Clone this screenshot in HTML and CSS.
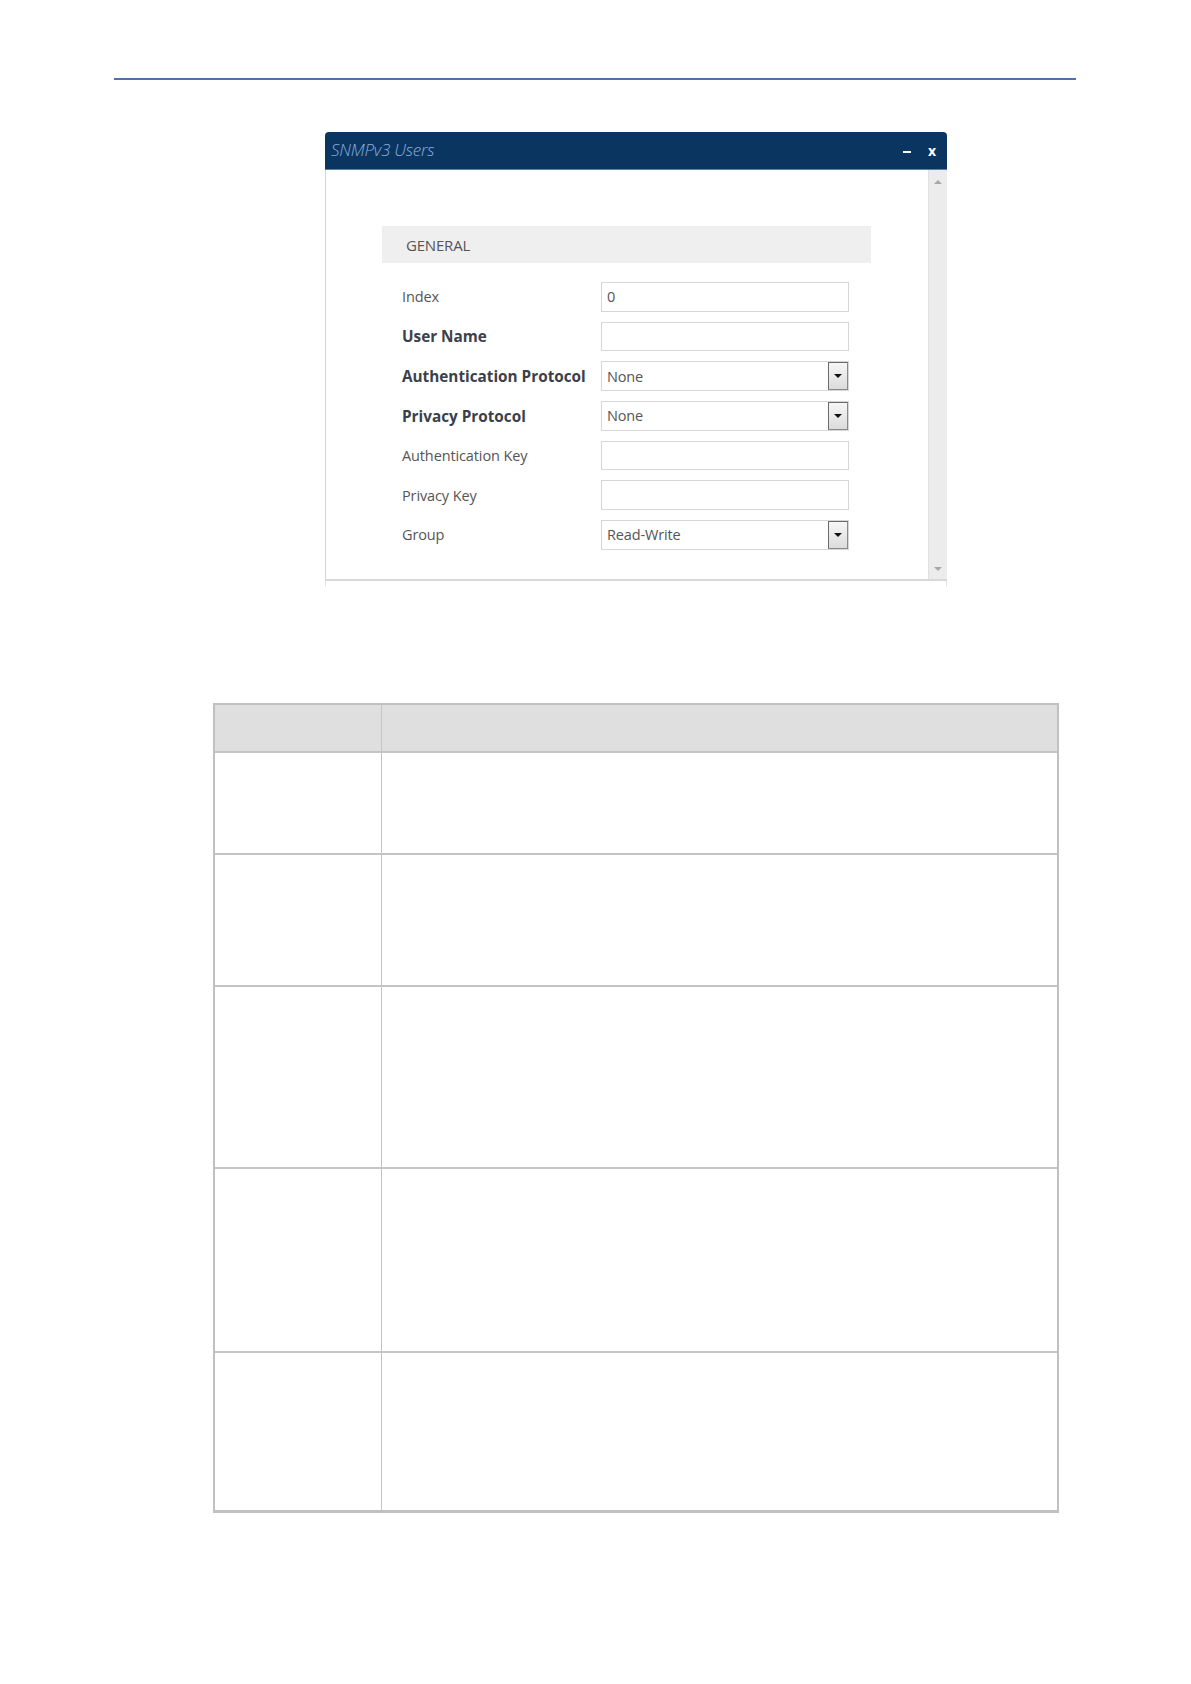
FILE: index.html
```html
<!DOCTYPE html>
<html lang="en">
<head>
<meta charset="utf-8">
<title>SNMPv3 Users</title>
<link rel="stylesheet" href="styles.css">
</head>
<body>
<div class="rule"></div>

<div class="dialog">
  <div class="titlebar">
    <span class="title">SNMPv3 Users</span>
    <div class="controls">
      <span class="minimize"></span>
      <span class="close">x</span>
    </div>
  </div>
  <div class="dialog-body">
    <div class="content">
      <div class="section-head">GENERAL</div>
      <div class="form">
        <div class="row">
          <span class="label">Index</span>
          <div class="field"><span class="value">0</span></div>
        </div>
        <div class="row">
          <span class="label bold">User Name</span>
          <div class="field"></div>
        </div>
        <div class="row">
          <span class="label bold">Authentication Protocol</span>
          <div class="field select"><span class="value">None</span><span class="drop"><span class="tri"></span></span></div>
        </div>
        <div class="row">
          <span class="label bold">Privacy Protocol</span>
          <div class="field select"><span class="value">None</span><span class="drop"><span class="tri"></span></span></div>
        </div>
        <div class="row">
          <span class="label">Authentication Key</span>
          <div class="field"></div>
        </div>
        <div class="row">
          <span class="label">Privacy Key</span>
          <div class="field"></div>
        </div>
        <div class="row">
          <span class="label">Group</span>
          <div class="field select"><span class="value">Read-Write</span><span class="drop"><span class="tri"></span></span></div>
        </div>
      </div>
    </div>
    <div class="scrollbar">
      <span class="arrow up"></span>
      <span class="arrow down"></span>
    </div>
  </div>
  <div class="tail"></div>
</div>

<div class="table">
  <div class="trow head"><div class="cell"></div><div class="cell"></div></div>
  <div class="trow r1"><div class="cell"></div><div class="cell"></div></div>
  <div class="trow r2"><div class="cell"></div><div class="cell"></div></div>
  <div class="trow r3"><div class="cell"></div><div class="cell"></div></div>
  <div class="trow r4"><div class="cell"></div><div class="cell"></div></div>
  <div class="trow r5"><div class="cell"></div><div class="cell"></div></div>
</div>
</body>
</html>
```

FILE: styles.css
```css
* { box-sizing: border-box; }

body {
  margin: 0;
  background: #ffffff;
  font-family: "Open Sans", "Liberation Sans", sans-serif;
}

.rule {
  margin: 78px 0 0 114px;
  width: 962px;
  height: 2px;
  background: #4d72a9;
}

.dialog {
  margin: 52px 0 0 325px;
  width: 622px;
}

.titlebar {
  height: 38px;
  background: #0b3561;
  border-radius: 4px 4px 0 0;
  display: flex;
  align-items: center;
  justify-content: space-between;
  padding: 0 11px 3px 6px;
  border-bottom: 1px solid #5a7ea8;
}

.title {
  font-style: italic;
  font-weight: 300;
  font-size: 17px;
  letter-spacing: -0.2px;
  color: #8aaddb;
}

.controls {
  display: flex;
  align-items: center;
  gap: 17px;
  padding-top: 6px;
}

.minimize {
  display: block;
  width: 8px;
  height: 2px;
  background: #ffffff;
}

.close {
  color: #ffffff;
  font-weight: 700;
  font-size: 14px;
  line-height: 1;
  padding-bottom: 2px;
}

.dialog-body {
  display: flex;
  height: 411px;
  border-left: 1px solid #d4d4d4;
  border-bottom: 2px solid #d8d8d8;
}

.content {
  flex: 1;
  padding: 56px 57px 0 56px;
}

.section-head {
  height: 37px;
  background: #efefef;
  display: flex;
  align-items: center;
  padding-left: 24px;
  font-size: 15px;
  color: #555555;
  letter-spacing: -0.2px;
}

.form {
  margin-top: 19px;
  padding-left: 20px;
  display: flex;
  flex-direction: column;
  gap: 10.2px;
}

.row {
  display: grid;
  grid-template-columns: 199px 248px;
  align-items: center;
  height: 29.5px;
}

.label {
  font-size: 14.5px;
  color: #555555;
  letter-spacing: -0.12px;
  white-space: nowrap;
}

.label.bold {
  font-size: 15.3px;
  font-weight: 700;
  color: #3a414a;
  letter-spacing: 0;
}

.field {
  position: relative;
  height: 29.5px;
  border: 1.5px solid #d6d6d6;
  background: #ffffff;
  display: flex;
  align-items: center;
  padding-left: 5px;
}

.value {
  font-size: 14.5px;
  color: #555555;
  letter-spacing: -0.15px;
}

.drop {
  position: absolute;
  right: 0;
  top: 0;
  bottom: 0;
  width: 20px;
  border: 1px solid #6a6a6a;
  border-right-color: #8a8a8a;
  border-bottom-color: #8a8a8a;
  background: linear-gradient(#f6f6f6, #dcdcdc);
  display: flex;
  align-items: center;
  justify-content: center;
}

.tri {
  width: 0;
  height: 0;
  border-left: 4px solid transparent;
  border-right: 4px solid transparent;
  border-top: 4px solid #111111;
}

.scrollbar {
  width: 19px;
  background: #ececec;
  border-left: 1px solid #e0e0e0;
  display: flex;
  flex-direction: column;
  justify-content: space-between;
  align-items: center;
  padding: 10px 0 8px;
}

.arrow {
  width: 0;
  height: 0;
  border-left: 4px solid transparent;
  border-right: 4px solid transparent;
}

.arrow.up { border-bottom: 4.5px solid #a8a8a8; }
.arrow.down { border-top: 4.5px solid #a8a8a8; }

.tail {
  height: 5px;
  border-left: 1px solid #e2e2e2;
  border-right: 1px solid #e2e2e2;
}

.table {
  margin: 117px 0 0 213px;
  width: 846px;
  border: 2px solid #c0c0c0;
  border-bottom-width: 3px;
}

.trow {
  display: grid;
  grid-template-columns: 166px 1fr;
}

.trow + .trow { border-top: 2px solid #c4c4c4; }

.cell + .cell { border-left: 1.5px solid #c4c4c4; }

.trow.head { height: 46px; background: #dfdfdf; }
.trow.r1 { height: 102px; }
.trow.r2 { height: 132px; }
.trow.r3 { height: 182px; }
.trow.r4 { height: 184px; }
.trow.r5 { height: 159px; }
```
